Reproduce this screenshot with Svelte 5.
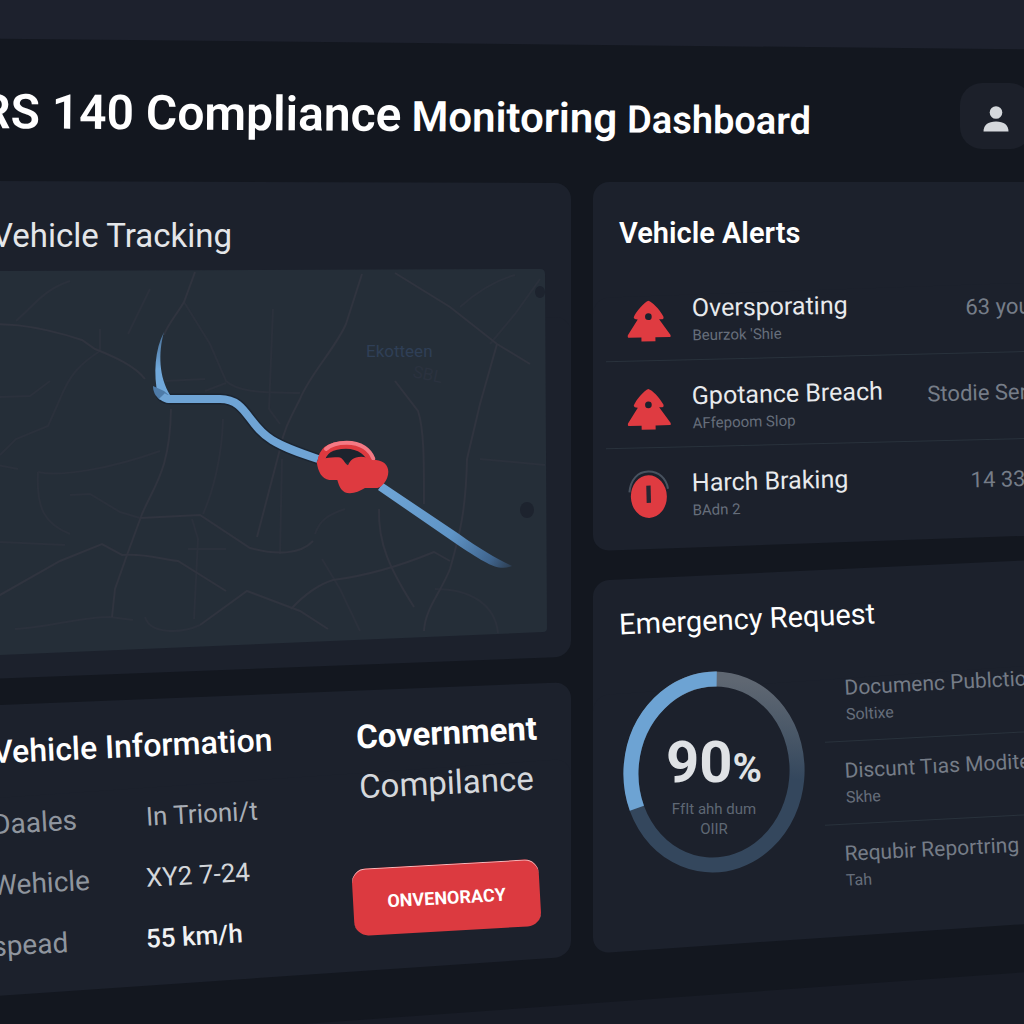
<script lang="ts">
	const alerts = [
		{ icon: "tree", title: "Oversporating", sub: "Beurzok 'Shie", meta: "63 your" },
		{ icon: "tree", title: "Gpotance Breach", sub: "AFfepoom Slop", meta: "Stodie Serv" },
		{ icon: "brake", title: "Harch Braking", sub: "BAdn 2", meta: "14 338" },
	];

	const requests = [
		{ title: "Documenc Publction", sub: "Soltixe" },
		{ title: "Discunt Tıas Moditem", sub: "Skhe" },
		{ title: "Requbir Reportring", sub: "Tah" },
	];

	const info = [
		{ label: "Daales", value: "In Trioni/t", tone: "muted" },
		{ label: "Wehicle", value: "XY2 7-24", tone: "plain" },
		{ label: "spead", value: "55 km/h", tone: "strong" },
	];

	const roads = [
		"M-24 56 C0 54 30 54 82 71 L95 80 C115 88 135 97 145 110",
		"M195 3 L184 33 C175 48 168 55 164 66",
		"M171 140 C170 200 155 215 142 245 L127 286 L115 320 L112 348",
		"M-24 338 L0 326 L60 292 L102 275 L122 286 C145 284 160 290 178 292 L226 322",
		"M140 249 L200 246 L250 279 C275 286 300 286 313 272",
		"M200 356 L247 322 L300 342 L328 360",
		"M291 340 C305 325 320 315 333 311 C365 307 400 297 434 283 L450 292",
		"M395 4 L450 38 L497 75 L530 95",
		"M497 75 L480 135 L467 190 C466 240 460 265 450 300 C440 325 425 340 424 362",
		"M395 112 L418 142 C424 160 424 190 424 235",
		"M379 240 C378 275 390 300 414 338",
		"M362 5 L346 55 C335 80 310 105 300 130 C290 150 284 160 280 180 L257 268",
	];

	const lanes = [
		"M184 33 L210 75 L226 112 C240 125 270 123 300 124",
		"M-24 192 L18 200",
		"M38 203 C60 208 110 200 160 182",
		"M38 203 C36 240 45 255 70 265",
		"M0 186 L16 170 L48 157 L60 130 C70 105 80 95 100 82 L100 60",
		"M15 360 C50 358 80 348 110 348 L133 351",
		"M145 348 C150 365 180 365 200 356",
		"M223 150 C222 190 212 225 203 245",
		"M192 250 L198 270 L194 350",
		"M188 280 L226 280",
		"M540 10 L515 45 L490 75",
		"M322 290 L340 320 L360 362",
		"M480 190 L545 196",
		"M460 38 C480 20 500 10 515 6",
		"M16 52 C35 35 45 20 70 12",
		"M273 40 L269 140 L280 155",
		"M128 65 L150 20",
		"M0 273 L65 276",
		"M282 190 L280 285",
		"M165 112 L205 110 M205 122 L226 114",
		"M315 265 C320 250 330 245 345 240",
		"M435 320 C470 320 495 335 498 364",
		"M0 128 L30 127 L50 112",
		"M70 226 L90 225 L120 243 L140 249",
	];
</script>

<main class="page">
	<div class="top-band"></div>

	<header>
		<h1>
			<span class="near">RS 140 Compliance</span>
			<span class="mid">Monitoring</span>
			<span class="far">Dashboard</span>
		</h1>
		<button class="user" type="button" aria-label="Account">
			<svg viewBox="0 0 26 26" width="26" height="26" aria-hidden="true">
				<circle cx="13" cy="6.5" r="6.3" />
				<path d="M.5 25.5 C.5 19 5 15.5 13 15.5 S25.5 19 25.5 25.5 Z" />
			</svg>
		</button>
	</header>

	<div class="board">
		<div class="column">
			<section class="card tracking">
				<h2>Vehicle Tracking</h2>
				<svg class="map" viewBox="-24 0 570 375" role="img" aria-label="Vehicle route">
					<defs>
						<linearGradient id="tail" x1="380" y1="218" x2="512" y2="300" gradientUnits="userSpaceOnUse">
							<stop offset="0" stop-color="#6fa5d6" />
							<stop offset=".55" stop-color="#5f94c6" />
							<stop offset=".85" stop-color="#40658e" />
							<stop offset="1" stop-color="#2b3a4c" />
						</linearGradient>
						<linearGradient id="head" x1="0" y1="64" x2="0" y2="100" gradientUnits="userSpaceOnUse">
							<stop offset="0" stop-color="#4a7198" />
							<stop offset="1" stop-color="#71a8da" />
						</linearGradient>
					</defs>
					<path class="ground" d="M-24 2 L540 0 Q545 0 545 5 L547 359 Q547 363 543 363 L-24 387 Z" />
					{#each lanes as d}
						<path class="lane" {d} />
					{/each}
					{#each roads as d}
						<path class="road" {d} />
					{/each}
					<ellipse class="blot" cx="540" cy="23" rx="5" ry="6" />
					<ellipse class="blot" cx="527" cy="241" rx="7" ry="8" />
					<text class="place" x="366" y="88">Ekotteen</text>
					<text class="place faint" x="412" y="108" transform="rotate(12 412 108)">SBL</text>

					<path class="route-edge" d="M160 124 C164 131 168 130 175 130 L220 130 C247 130 247 156 272 171 C285 179 300 184 318 190" />
					<path fill="url(#head)" d="M164 63 C158 84 159 108 170 126 L158 127 C153 105 155 80 164 63 Z" />
					<path fill="#4e7ba8" d="M153 117 L164 122 L170 127 L160 131 C155 127 153 122 153 117 Z" />
					<path class="route" d="M162 127 C166 131 170 130 175 130 L220 130 C247 130 247 156 272 171 C285 179 300 184 318 190" />
					<path fill="url(#tail)" d="M383 214 L459 265 C480 280 497 290 512 297 C498 303 485 294 455 274 L378 221 Z" />

					<g transform="translate(290 -9) scale(.3333)">
						<path d="M100 608 Q106 568 168 566 Q222 568 242 606 Z" fill="#1d232d" />
						<path d="M93 608 C96 566 130 555 168 555 C212 555 237 580 246 606" fill="none" stroke="#dd393f" stroke-width="22" />
						<path d="M108 567 C126 550 150 548 170 548 C214 548 240 570 250 596" fill="none" stroke="#f47984" stroke-width="12" stroke-linecap="round" />
						<path fill="#de3a40" d="M80 605 C90 596 118 592 145 592 C160 592 164 612 174 616 C180 602 190 590 214 590 C235 590 240 603 258 600 C280 602 295 615 295 635 C295 660 275 682 262 684 L225 684 C210 692 195 700 180 700 C155 700 148 680 142 660 L118 660 C95 656 84 635 80 605 Z" />
					</g>
				</svg>
			</section>

			<section class="card vehicle">
				<div class="details">
					<h2>Vehicle Information</h2>
					<dl>
						{#each info as row}
							<div>
								<dt>{row.label}</dt>
								<dd class={row.tone}>{row.value}</dd>
							</div>
						{/each}
					</dl>
				</div>
				<div class="government">
					<h2>Covernment</h2>
					<p>Compilance</p>
					<button type="button">ONVENORACY</button>
				</div>
			</section>
		</div>

		<div class="column">
			<section class="card alerts">
				<h2>Vehicle Alerts</h2>
				<ul>
					{#each alerts as alert}
						<li>
							{#if alert.icon === "tree"}
								<svg class="tree" viewBox="110 115 132 126" width="44" height="42" aria-hidden="true">
									<path fill="#df3b41" d="M175 117 C163 121 138 147 130 166 Q131 173 142 173 L111 220 Q109 227 116 227 H152 V239 H194 V227 H238 Q242 225 239 220 L206 173 H216 Q222 171 219 165 C206 141 187 121 175 117 Z" />
									<circle cx="174" cy="165" r="10" fill="#1c212c" />
								</svg>
							{:else}
								<svg viewBox="108 610 132 150" width="44" height="50" aria-hidden="true">
									<path d="M115 678 C119 640 141 617 173 617 S227 640 231 670" fill="none" stroke="#48525f" stroke-width="6" />
									<ellipse cx="173" cy="692" rx="54" ry="64" fill="#df3b41" />
									<path d="M166 659 H179 V711 H166 Z" fill="#272632" />
								</svg>
							{/if}
							<div class="what">
								<strong>{alert.title}</strong>
								<small>{alert.sub}</small>
							</div>
							<span class="meta">{alert.meta}</span>
						</li>
					{/each}
				</ul>
			</section>

			<section class="card emergency">
				<h2>Emergency Request</h2>
				<div class="body">
					<div class="gauge">
						<svg viewBox="0 0 182 202" width="182" height="202" aria-hidden="true">
							<defs>
								<linearGradient id="ring" x1="0" y1="0" x2="0" y2="1">
									<stop offset="0" stop-color="#5f6772" />
									<stop offset=".25" stop-color="#4a5868" />
									<stop offset=".5" stop-color="#34475d" />
								</linearGradient>
							</defs>
							<g transform="rotate(5 91 101)">
								<ellipse cx="91" cy="101" rx="83" ry="93" stroke="url(#ring)" />
								<ellipse class="done" cx="91" cy="101" rx="83" ry="93" pathLength="100" />
							</g>
						</svg>
						<div class="reading">
							<p class="value">90<span>%</span></p>
							<p class="note">FfIt ahh dum<br />OIIR</p>
						</div>
					</div>
					<ul>
						{#each requests as request}
							<li>
								<strong>{request.title}</strong>
								<small>{request.sub}</small>
							</li>
						{/each}
					</ul>
				</div>
			</section>
		</div>
	</div>

	<div class="bottom-band"></div>
</main>

<style>
	:global(body) {
		margin: 0;
		background: #13171f;
	}

	.page {
		display: flex;
		flex-direction: column;
		min-height: 100vh;
		overflow: hidden;
		background: #13171f;
		color: #e8eaed;
		font-family: Roboto, "Liberation Sans", sans-serif;
	}

	h1,
	h2,
	p,
	ul,
	dl,
	dd {
		margin: 0;
		padding: 0;
	}

	ul {
		list-style: none;
	}

	button {
		border: 0;
		font-family: inherit;
		cursor: pointer;
	}

	.top-band {
		position: relative;
		height: 44px;
	}

	.top-band::before {
		content: "";
		position: absolute;
		inset: -20px 0 0;
		background: #1d212d;
		transform: skewY(0.6deg);
	}

	header {
		display: flex;
		align-items: center;
		justify-content: space-between;
		margin: 0 -8px 0 -20px;
		padding: 39px 0 33px;
	}

	h1 {
		color: #fff;
		font-size: 40px;
		font-weight: 600;
		line-height: 56px;
		white-space: nowrap;
		transform: rotate(0.4deg);
	}

	.near {
		font-size: 48px;
	}

	.mid {
		font-size: 42px;
	}

	.far {
		font-size: 38px;
	}

	.user {
		display: grid;
		place-items: center;
		width: 72px;
		height: 66px;
		padding-top: 6px;
		border-radius: 22px;
		background: #1c202a;
	}

	.user svg {
		fill: #d5d8dc;
	}

	.board {
		display: grid;
		grid-template-columns: 17fr 13fr;
		gap: 22px;
		align-items: start;
		margin: 0 -24px;
	}

	.column {
		display: flex;
		flex-direction: column;
		gap: 27px;
		min-width: 0;
	}

	/* Each card is two overlapping slabs, so its top and bottom edges can slope apart. */
	.card {
		position: relative;
		isolation: isolate;
	}

	.card::before,
	.card::after {
		content: "";
		position: absolute;
		inset: 0 0 30%;
		z-index: -1;
		border-radius: 16px;
		background: #1c212c;
		transform: skewY(var(--top));
	}

	.card::after {
		inset: 30% 0 0;
		transform: skewY(var(--bottom));
	}

	h2 {
		width: fit-content;
		color: #fff;
		font-size: 32px;
		font-weight: 500;
		line-height: 40px;
		white-space: nowrap;
	}

	.tracking {
		--top: 0.2deg;
		--bottom: -2.2deg;
		padding: 34px 25px 23px 0;
	}

	.tracking h2 {
		margin: 0 0 13px 16px;
		color: #e4e6e9;
		font-size: 33px;
		font-weight: 400;
	}

	.map {
		display: block;
		width: 100%;
		overflow: visible;
	}

	.ground {
		fill: #252e38;
	}

	.road,
	.lane {
		fill: none;
		stroke: #30343f;
		stroke-width: 2;
	}

	.lane {
		stroke: #2b313c;
	}

	.blot {
		fill: #1d232e;
	}

	.place {
		fill: #2f3f56;
		font-size: 17px;
	}

	.place.faint {
		fill: #2b323f;
	}

	.route-edge,
	.route {
		fill: none;
		stroke: #1b2430;
		stroke-width: 11;
	}

	.route {
		stroke: #6fa4d5;
		stroke-width: 8;
	}

	.vehicle {
		--top: -2.3deg;
		--bottom: -3.9deg;
		display: flex;
		justify-content: space-between;
		padding: 0 31px 0 16px;
	}

	.details {
		flex: 0 1 298px;
		padding: 32px 0 22px;
	}

	.details h2 {
		transform: rotate(-2.6deg);
	}

	.details dl {
		display: flex;
		flex-direction: column;
		gap: 29px;
		margin-top: 35px;
	}

	.details dl div {
		display: flex;
		font-size: 26px;
		line-height: 32px;
		transform: rotate(-3.2deg);
	}

	dt {
		flex: 0 0 154px;
		color: #8f959e;
		font-size: 28px;
	}

	.muted {
		color: #a9aeb6;
	}

	.plain {
		color: #d3d6da;
	}

	.strong {
		color: #f0f1f3;
		font-weight: 500;
	}

	.government {
		flex: 0 0 187px;
		display: flex;
		flex-direction: column;
		align-items: center;
		padding-top: 14px;
	}

	.government h2,
	.government p {
		font-size: 33px;
		line-height: 50px;
		transform: rotate(-2.8deg);
	}

	.government h2 {
		font-weight: 700;
	}

	.government p {
		color: #d5d8dc;
	}

	.government button {
		width: 100%;
		height: 67px;
		margin-top: 56px;
		border-radius: 14px;
		background: #dc3a40;
		box-shadow: inset 0 1px 0 #f0b9bc;
		color: #fff;
		font-size: 18px;
		font-weight: 700;
		transform: rotate(-3.2deg);
	}

	.alerts {
		--top: 0deg;
		--bottom: -2deg;
		padding: 33px 10px 13px 14px;
	}

	.alerts h2,
	.emergency h2 {
		margin-left: 12px;
		font-size: 29px;
		line-height: 36px;
	}

	.alerts h2 {
		font-weight: 600;
	}

	.alerts ul {
		margin-top: 19px;
	}

	.alerts li {
		display: flex;
		align-items: flex-start;
		gap: 21px;
		padding: 21px 0 11px 20px;
		transform: rotate(-1deg);
	}

	.alerts li + li {
		border-top: 1px solid #29323c;
		transform: rotate(-1.4deg);
	}

	.what {
		display: flex;
		flex: 1;
		flex-direction: column;
	}

	strong {
		font-size: 25px;
		font-weight: 400;
		line-height: 30px;
		white-space: nowrap;
	}

	small {
		color: #666e7b;
		font-size: 15px;
		line-height: 24px;
	}

	.alerts svg {
		flex: none;
	}

	.tree {
		margin-top: 6px;
	}

	.meta {
		margin-top: 4px;
		color: #767d88;
		font-size: 22px;
		line-height: 30px;
		white-space: nowrap;
	}

	.emergency {
		--top: -2.7deg;
		--bottom: -3.9deg;
		padding: 31px 0 36px 14px;
	}

	.emergency h2 {
		font-weight: 400;
		transform: rotate(-2.5deg);
	}

	.body {
		display: flex;
		gap: 22px;
		margin: 17px 0 0 16px;
	}

	.gauge {
		display: grid;
		flex: none;
		align-self: flex-start;
		place-items: center;
		margin-top: 17px;
	}

	.gauge > * {
		grid-area: 1 / 1;
	}

	.gauge ellipse {
		fill: none;
		stroke-width: 15;
	}

	.gauge .done {
		stroke: #6da3d3;
		stroke-dasharray: 0 42 32 100;
	}

	.reading {
		padding-top: 28px;
		text-align: center;
	}

	.value {
		color: #dfe2e5;
		font-size: 58px;
		font-weight: 700;
		line-height: 56px;
	}

	.value span {
		font-size: 40px;
	}

	.note {
		margin-top: 2px;
		color: #5f6874;
		font-size: 15px;
		line-height: 20px;
	}

	.body ul {
		flex: 1;
		min-width: 0;
	}

	.body li {
		display: flex;
		flex-direction: column;
		padding: 14px 0 14px 18px;
		color: #757c87;
		transform: rotate(-3deg);
	}

	.body li + li {
		border-top: 1px solid #29323c;
	}

	.body strong {
		font-size: 21px;
	}

	.body small {
		font-size: 16px;
	}

	.bottom-band {
		position: relative;
		flex: 1;
		margin-top: 32px;
	}

	.bottom-band::before {
		content: "";
		position: absolute;
		inset: 0 0 -80px;
		background: #181c26;
		transform: skewY(-4.1deg);
	}
</style>
